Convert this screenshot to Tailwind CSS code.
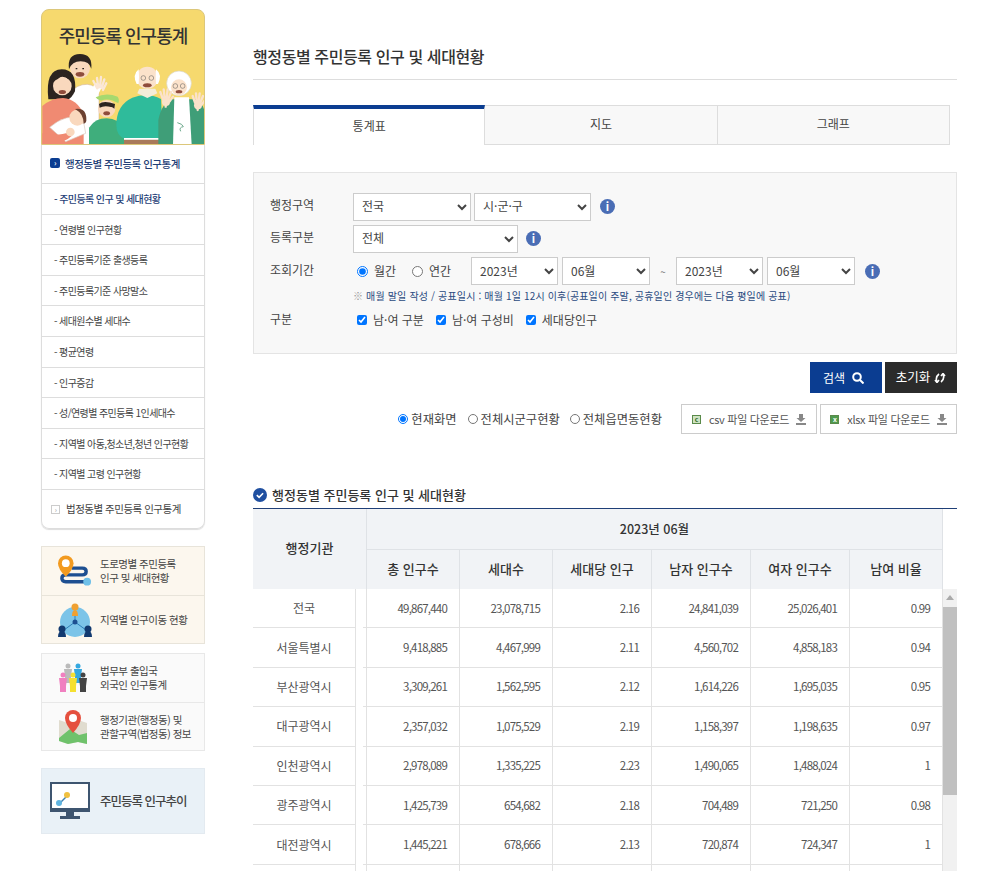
<!DOCTYPE html>
<html lang="ko">
<head>
    <meta charset="UTF-8">
    <title>행정동별 주민등록 인구 및 세대현황</title>
    <script src="https://cdn.jsdelivr.net/npm/@tailwindcss/browser@4"></script>
</head>
<body class="bg-white h-[871px] overflow-hidden font-['Noto_Sans_CJK_KR','Noto_Sans',sans-serif] text-[#555]">
<div class="flex">
    <!-- sidebar -->
    <aside class="w-[164px] ml-[41px] mt-[9px] shrink-0">
        <div class="h-[136px] bg-[#f6d96e] border border-[#dcc77a] rounded-t-[8px] overflow-hidden relative">
            <p class="text-center text-[#333] text-[18px] font-medium tracking-[-1px] pt-[12px] leading-[26px]">주민등록 인구통계</p>
            <svg class="absolute left-0 top-0" width="164" height="135" viewBox="0 0 490 405">
                <!-- man -->
                <path d="M80 405V250q25-28 55-27 25 2 35 25v157z" fill="#fff" stroke="#caa98c" stroke-width="1.5"/>
                <circle cx="113" cy="175" r="30" fill="#f9d8bd"/>
                <path d="M80 178q-6-46 33-46 38 0 34 44-6-22-32-22-26 0-35 24z" fill="#2c2420"/>
                <ellipse cx="113" cy="193" rx="13" ry="7" fill="#8f4c3c"/>
                <path d="M100 176h5M120 176h5" stroke="#2c2420" stroke-width="4"/>
                <path d="M150 262l15-30" stroke="#fff" stroke-width="24" stroke-linecap="round"/>
                <g stroke="#fbe7d6" stroke-width="7" stroke-linecap="round"><path d="M165 235l-12-22M168 232l-4-28M173 231l3-30M178 234l8-26M182 240l10-20"/></g>
                <!-- woman -->
                <path d="M18 268q-10-90 40-90 46 0 40 66-10 20-20 24z" fill="#2c2420"/>
                <circle cx="60" cy="228" r="28" fill="#f9d8bd"/>
                <path d="M30 215q20-6 30-22 14 14 30 22-2-26-30-28-28 2-30 28z" fill="#2c2420"/>
                <ellipse cx="60" cy="246" rx="11" ry="6" fill="#8f4c3c"/>
                <path d="M0 405V288q28-24 62-24 44 4 62 50v91z" fill="#f08a72"/>
                <path d="M22 352q50-44 100-26l8 44-60 25z" fill="#fff" stroke="#d8c9bb" stroke-width="2"/>
                <path d="M0 370q50 10 80-4l8 12q-30 27-88 27z" fill="#f08a72"/>
                <circle cx="84" cy="366" r="13" fill="#f9d8bd"/>
                <circle cx="105" cy="323" r="24" fill="#f9d8bd"/>
                <path d="M98 297q36-6 34 36-2 8-8 8 0-30-26-44z" fill="#6b4030"/>
                <!-- boy -->
                <path d="M140 405v-52q18-28 53-28 36 0 52 32v48z" fill="#3fae7c"/>
                <circle cx="193" cy="296" r="26" fill="#f9d8bd"/>
                <path d="M170 282q14-12 48 0l-2 14q-6-6-10-5-20-6-34 2z" fill="#2c2420"/>
                <path d="M160 262q32-16 66-2 6 8 2 20-28-18-52-8-12-2-16-10z" fill="#a6d96f"/>
                <ellipse cx="193" cy="310" rx="10" ry="6" fill="#8f4c3c"/>
                <!-- grandpa -->
                <path d="M222 345q0-60 48-82 45-18 86 4l6 122H250q-28-10-28-44z" fill="#2fbb9b"/>
                <path d="M245 388h112v17H245z" fill="#a97a5a"/>
                <path d="M245 384h112v5H245z" fill="#fff"/>
                <circle cx="315" cy="203" r="33" fill="#fbe2cb"/>
                <path d="M283 222q-14-28 6-44 2 22 0 44zm64 0q14-28-6-44-2 22 0 44z" fill="#fff"/>
                <path d="M285 250l30 14 30-14-6-14h-48z" fill="#f3ecd9"/>
                <circle cx="303" cy="204" r="7" fill="none" stroke="#555" stroke-width="1.5"/><circle cx="327" cy="204" r="7" fill="none" stroke="#555" stroke-width="1.5"/>
                <ellipse cx="315" cy="226" rx="13" ry="6" fill="#8f4c3c"/>
                <!-- grandma -->
                <path d="M348 405V330q10-50 40-62h70q32 12 30 60v77z" fill="#3f9e78"/>
                <path d="M396 262h44l8 143h-56z" fill="#fff"/>
                <circle cx="410" cy="220" r="37" fill="#fff" stroke="#d9d6c8" stroke-width="2"/>
                <circle cx="410" cy="232" r="24" fill="#fbe2cb"/>
                <circle cx="399" cy="228" r="7" fill="none" stroke="#555" stroke-width="1.5"/><circle cx="421" cy="228" r="7" fill="none" stroke="#555" stroke-width="1.5"/>
                <ellipse cx="410" cy="245" rx="10" ry="5" fill="#8f4c3c"/>
                <path d="M405 338q16 4 18 12-14 2-8 14" fill="none" stroke="#6ba88b" stroke-width="3"/>
                <g stroke="#fbe2cb" stroke-width="7" stroke-linecap="round">
                    <path d="M370 272v18M362 268l-8-22M367 264l-3-26M373 264l3-26M378 268l8-22M382 274l10-14"/>
                    <path d="M466 282v18M458 278l-7-20M463 274l-2-24M469 274l3-24M474 278l8-20M478 284l9-12"/>
                </g>
                <circle cx="371" cy="276" r="12" fill="#fbe2cb"/><circle cx="467" cy="286" r="12" fill="#fbe2cb"/>
            </svg>
        </div>
        <div class="border-x border-b border-[#ddd] rounded-b-[8px] shadow-[0_1px_1px_#ddd] text-[10px] tracking-[-0.6px] text-[#444]">
            <div class="h-[39px] flex items-center pl-[8px] gap-[5px] text-[#1f3f77] font-medium border-b border-[#ddd] text-[10.5px] tracking-[-0.5px]">
                <span class="w-[10px] h-[10px] rounded-[2px] bg-[#0b3d91] text-white text-[8px] leading-[9px] text-center mb-[3px]">›</span>
                행정동별 주민등록 인구통계
            </div>
            <div class="h-[31px] flex items-center pl-[12px] pb-[2px] border-b border-[#ddd] text-[#1f3f77] font-medium">- 주민등록 인구 및 세대현황</div>
            <div class="h-[30px] flex items-center pl-[12px] pb-[1px] border-b border-[#ddd]">- 연령별 인구현황</div>
            <div class="h-[31px] flex items-center pl-[12px] pb-[2px] border-b border-[#ddd]">- 주민등록기준 출생등록</div>
            <div class="h-[30px] flex items-center pl-[12px] pb-[1px] border-b border-[#ddd]">- 주민등록기준 사망말소</div>
            <div class="h-[31px] flex items-center pl-[12px] pb-[2px] border-b border-[#ddd]">- 세대원수별 세대수</div>
            <div class="h-[31px] flex items-center pl-[12px] pb-[2px] border-b border-[#ddd]">- 평균연령</div>
            <div class="h-[30px] flex items-center pl-[12px] pb-[1px] border-b border-[#ddd]">- 인구증감</div>
            <div class="h-[31px] flex items-center pl-[12px] pb-[2px] border-b border-[#ddd]">- 성/연령별 주민등록 1인세대수</div>
            <div class="h-[30px] flex items-center pl-[12px] pb-[1px] border-b border-[#ddd]">- 지역별 아동,청소년,청년 인구현황</div>
            <div class="h-[31px] flex items-center pl-[12px] pb-[2px] border-b border-[#ddd]">- 지역별 고령 인구현황</div>
            <div class="h-[38px] flex items-center pl-[9px] gap-[6px] text-[10.5px] tracking-[-0.5px]">
                <span class="w-[9px] h-[9px] border border-[#ccc] text-[#999] text-[7px] leading-[7px] text-center">›</span>
                법정동별 주민등록 인구통계
            </div>
        </div>

        <div class="mt-[17px] border border-[#e8e4da] bg-[#fcf7ee] text-[10.5px] leading-[14px] tracking-[-0.5px] text-[#444]">
            <div class="h-[49px] flex items-center border-b border-[#e8e4da]">
                <svg class="ml-[16px] w-[34px] h-[32px] shrink-0" viewBox="0 0 35 32">
                    <path d="M14 13h11q4 0 4 3.5T25 20H8q-4 0-4 3.5T8 27h20" fill="none" stroke="#1d4f91" stroke-width="3.5"/>
                    <path d="M8 0a8 8 0 0 1 8 8q0 6-8 14Q0 14 0 8a8 8 0 0 1 8-8z" fill="#f29a1f"/>
                    <circle cx="8" cy="8" r="4" fill="#fff"/>
                    <circle cx="30" cy="27" r="4" fill="#6fc0e8"/>
                </svg>
                <p class="ml-[8px]">도로명별 주민등록<br>인구 및 세대현황</p>
            </div>
            <div class="h-[47px] flex items-center">
                <svg class="ml-[16px] w-[34px] h-[34px] shrink-0" viewBox="0 0 34 34">
                    <circle cx="17" cy="19" r="15" fill="#7cc4e8"/>
                    <path d="M17 10v9M6 27l11-8 11 8" stroke="#2d7fb8" stroke-width="1" fill="none"/>
                    <circle cx="17" cy="19" r="2.5" fill="#1d4f91"/>
                    <circle cx="17" cy="4" r="3.5" fill="#f0a030"/><path d="M14 13q0-6 3-6t3 6z" fill="#f0a030"/>
                    <circle cx="4" cy="26" r="3.5" fill="#123a70"/><path d="M0 34q0-6 4-6t4 6z" fill="#123a70"/>
                    <circle cx="30" cy="26" r="3.5" fill="#123a70"/><path d="M26 34q0-6 4-6t4 6z" fill="#123a70"/>
                </svg>
                <p class="ml-[8px]">지역별 인구이동 현황</p>
            </div>
        </div>

        <div class="mt-[9px] border border-[#e8e8e8] bg-[#fafafa] text-[10.5px] leading-[14px] tracking-[-0.5px] text-[#444]">
            <div class="h-[49px] flex items-center border-b border-[#e8e8e8]">
                <svg class="ml-[16px] w-[30px] h-[30px] shrink-0" viewBox="0 0 30 30">
                    <g fill="#bbb"><circle cx="10" cy="3" r="2.5"/><path d="M6 6h8l-1 8v6H7v-6z"/></g>
                    <g fill="#35a8e0"><circle cx="20" cy="3" r="2.5"/><path d="M16 6h8l-1 8v6h-6v-6z"/></g>
                    <g fill="#f080c0"><circle cx="5" cy="12" r="2.5"/><path d="M1 15h8l-1 8v6H2v-6z"/></g>
                    <g fill="#f5e030"><circle cx="15" cy="12" r="2.5"/><path d="M11 15h8l-1 8v6h-6v-6z"/></g>
                    <g fill="#444"><circle cx="25" cy="12" r="2.5"/><path d="M21 15h8l-1 8v6h-6v-6z"/></g>
                </svg>
                <p class="ml-[12px]">법무부 출입국<br>외국인 인구통계</p>
            </div>
            <div class="h-[47px] flex items-center">
                <svg class="ml-[16px] w-[30px] h-[34px] shrink-0" viewBox="0 0 30 34">
                    <path d="M1 10l9 3 10-3 9 3v21l-9-2-10 2-9-3z" fill="#e0dccf"/>
                    <path d="M1 28l11-9 9 6 8-2v11l-9-2-10 2-9-3z" fill="#6fc26b"/>
                    <path d="M15 0a8 8 0 0 1 8 8q0 6-8 15Q7 14 7 8a8 8 0 0 1 8-8z" fill="#e5503f"/>
                    <circle cx="15" cy="8" r="4" fill="#fff"/>
                </svg>
                <p class="ml-[12px]">행정기관(행정동) 및<br>관할구역(법정동) 정보</p>
            </div>
        </div>

        <div class="mt-[17px] h-[66px] border border-[#e3eaf0] bg-[#e9f1f7] flex items-center">
            <svg class="ml-[8px] w-[40px] h-[38px] shrink-0" viewBox="0 0 40 38">
                <rect x="1" y="1" width="38" height="28" fill="#fff" stroke="#3e5570" stroke-width="2"/>
                <rect x="0" y="26" width="40" height="4" fill="#3e5570"/>
                <path d="M16 30h8v4h-8zM10 34h20v3H10z" fill="#3e5570"/>
                <path d="M10 21l8-8" stroke="#3e80b0" stroke-width="1.5"/>
                <circle cx="9" cy="21" r="3" fill="#5fb4e0"/>
                <circle cx="17" cy="13" r="3" fill="#f0c040"/>
            </svg>
            <p class="ml-[10px] text-[12.5px] font-medium tracking-[-1px] text-[#444]">주민등록 인구추이</p>
        </div>
    </aside>

    <!-- main -->
    <main class="w-[704px] ml-[48px] shrink-0">
        <h1 class="mt-[44px] h-[36px] border-b border-[#ddd] text-[16px] leading-[24px] font-medium tracking-[-0.4px] text-[#333]">행정동별 주민등록 인구 및 세대현황</h1>

        <div class="mt-[25px] w-[697px] grid grid-cols-3 h-[40px] text-[12px] text-[#444]">
            <div class="border-t-[4px] border-t-[#0b3d91] border-x border-[#ddd] bg-white flex items-center justify-center pb-[2px]">통계표</div>
            <div class="border border-l-0 border-[#ddd] bg-[#f8f8f8] flex items-center justify-center pb-[2px]">지도</div>
            <div class="border border-l-0 border-[#ddd] bg-[#f8f8f8] flex items-center justify-center pb-[2px]">그래프</div>
        </div>

        <form class="mt-[27px] h-[182px] border border-[#e4e4e4] bg-[#f8f8f8] pt-[20px] pl-[16px] text-[12px] text-[#444]">
            <div class="flex items-center h-[28px]">
                <label class="w-[83px] mb-[4px]">행정구역</label>
                <select class="w-[118px] h-[28px] bg-white border border-[#ccc] px-[4px] pb-[3px] text-[12px]"><option>전국</option></select>
                <select class="w-[117px] h-[28px] ml-[3px] bg-white border border-[#ccc] px-[4px] pb-[3px] text-[12px]"><option>시·군·구</option></select>
                <span class="ml-[9px] mb-[2px] w-[15px] h-[15px] rounded-full bg-[#4a6db5] text-white text-[11px] font-bold leading-[15px] text-center">i</span>
            </div>
            <div class="flex items-center h-[28px] mt-[4px]">
                <label class="w-[83px] mb-[4px]">등록구분</label>
                <select class="w-[165px] h-[28px] bg-white border border-[#ccc] px-[4px] pb-[3px] text-[12px]"><option>전체</option></select>
                <span class="ml-[8px] mb-[2px] w-[15px] h-[15px] rounded-full bg-[#4a6db5] text-white text-[11px] font-bold leading-[15px] text-center">i</span>
            </div>
            <div class="flex items-center h-[28px] mt-[4px]">
                <label class="w-[83px] mb-[2px]">조회기간</label>
                <label class="flex items-center gap-[6px] ml-[4px] w-[55px]"><input type="radio" name="period" checked class="w-[11px] h-[11px]">월간</label>
                <label class="flex items-center gap-[6px] w-[59px]"><input type="radio" name="period" class="w-[11px] h-[11px]">연간</label>
                <select class="w-[87px] h-[28px] bg-white border border-[#ccc] px-[4px] pb-[1px] text-[12px]"><option>2023년</option></select>
                <select class="w-[88px] h-[28px] ml-[4px] bg-white border border-[#ccc] px-[4px] pb-[1px] text-[12px]"><option>06월</option></select>
                <span class="w-[26px] text-center text-[10px] text-[#777]">~</span>
                <select class="w-[87px] h-[28px] bg-white border border-[#ccc] px-[4px] pb-[1px] text-[12px]"><option>2023년</option></select>
                <select class="w-[88px] h-[28px] ml-[4px] bg-white border border-[#ccc] px-[4px] pb-[1px] text-[12px]"><option>06월</option></select>
                <span class="ml-[10px] w-[15px] h-[15px] rounded-full bg-[#4a6db5] text-white text-[11px] font-bold leading-[15px] text-center">i</span>
            </div>
            <p class="ml-[83px] mt-[3px] h-[16px] leading-[16px] text-[10px] tracking-[0.15px] text-[#2a4a80]"><span class="text-[#999]">※</span> 매월 말일 작성 / 공표일시 : 매월 1일 12시 이후(공표일이 주말, 공휴일인 경우에는 다음 평일에 공표)</p>
            <div class="flex items-center h-[20px] mt-[6px]">
                <label class="w-[83px] mb-[2px]">구분</label>
                <label class="flex items-center gap-[6px] ml-[4px] mr-[12px]"><input type="checkbox" checked class="w-[10px] h-[10px]">남·여 구분</label>
                <label class="flex items-center gap-[6px] mr-[12px]"><input type="checkbox" checked class="w-[10px] h-[10px]">남·여 구성비</label>
                <label class="flex items-center gap-[6px]"><input type="checkbox" checked class="w-[10px] h-[10px]">세대당인구</label>
            </div>
        </form>

        <div class="flex justify-end gap-[3px] mt-[8px] text-[12px] text-white">
            <button class="w-[72px] h-[31px] bg-[#0b3d91] flex items-center justify-center gap-[7px] pr-[5px]">검색
                <svg class="w-[12px] h-[12px]" viewBox="0 0 12 12" fill="none" stroke="#fff" stroke-width="2"><circle cx="5" cy="5" r="3.8"/><path d="M8 8l3.5 3.5"/></svg>
            </button>
            <button class="w-[72px] h-[31px] bg-[#2b2b2b] flex items-center justify-center gap-[4px] text-[12.5px]">초기화
                <svg class="w-[12px] h-[10px]" viewBox="0 0 12 10" fill="none" stroke="#fff" stroke-width="1.6"><path d="M5 1Q1 4 3 9M1 7l2 2.5L5 7"/><path d="M7 9q4-3 2-8M7 3l2-2.5L11 3"/></svg>
            </button>
        </div>

        <div class="flex items-center justify-end mt-[11px] text-[12.3px] text-[#444]">
            <label class="flex items-center gap-[3px] mr-[11px]"><input type="radio" name="scope" checked class="w-[10px] h-[10px]">현재화면</label>
            <label class="flex items-center gap-[3px] mr-[10px]"><input type="radio" name="scope" class="w-[10px] h-[10px]">전체시군구현황</label>
            <label class="flex items-center gap-[3px] mr-[19px]"><input type="radio" name="scope" class="w-[10px] h-[10px]">전체읍면동현황</label>
            <button class="w-[136px] h-[30px] border border-[#ccc] flex items-center justify-center text-[11px] tracking-[-0.3px] text-[#555]">
                <span class="w-[9px] h-[9px] border border-[#5a8a4a] bg-[#cfe3c2] text-[#2f6a2a] text-[7px] leading-[7px] font-bold text-center mr-[8px]">c</span>csv 파일 다운로드
                <svg class="w-[10px] h-[11px] ml-[7px]" viewBox="0 0 10 11" fill="#888"><path d="M3 0h4v4h2.5L5 8 .5 4H3zM0 9h10v2H0z"/></svg>
            </button>
            <button class="w-[137px] h-[30px] ml-[3px] border border-[#ccc] flex items-center justify-center text-[11px] tracking-[-0.3px] text-[#555]">
                <span class="w-[9px] h-[9px] border border-[#5a8a4a] bg-[#4f9a4f] text-white text-[7px] leading-[7px] font-bold text-center mr-[8px]">x</span>xlsx 파일 다운로드
                <svg class="w-[10px] h-[11px] ml-[7px]" viewBox="0 0 10 11" fill="#888"><path d="M3 0h4v4h2.5L5 8 .5 4H3zM0 9h10v2H0z"/></svg>
            </button>
        </div>

        <h2 class="mt-[51px] h-[24px] border-b border-[#1f3f77] flex items-start gap-[5px] text-[13px] leading-[20px] font-medium text-[#333]">
            <svg class="w-[14px] h-[14px] mt-[3px] shrink-0" viewBox="0 0 14 14"><circle cx="7" cy="7" r="7" fill="#1f4fa0"/><path d="M3.8 7.2l2.3 2.2 4-4.2" fill="none" stroke="#fff" stroke-width="1.6"/></svg>
            행정동별 주민등록 인구 및 세대현황
        </h2>

        <!-- table header -->
        <div class="grid grid-cols-[114px_93px_93px_99px_99px_99px_93px] grid-rows-[41px_39px] w-[690px] bg-[#f1f3f6] text-[13px] font-medium text-[#333]">
            <div class="row-span-2 flex items-center justify-center border-r border-[#dfe2e6] pb-[2px]">행정기관</div>
            <div class="col-span-6 flex items-center justify-center border-r border-b border-[#dfe2e6] text-[12.5px]">2023년 06월</div>
            <div class="flex items-center justify-center border-r border-[#dfe2e6] pb-[2px]">총 인구수</div>
            <div class="flex items-center justify-center border-r border-[#dfe2e6] pb-[2px]">세대수</div>
            <div class="flex items-center justify-center border-r border-[#dfe2e6] pb-[2px]">세대당 인구</div>
            <div class="flex items-center justify-center border-r border-[#dfe2e6] pb-[2px]">남자 인구수</div>
            <div class="flex items-center justify-center border-r border-[#dfe2e6] pb-[2px]">여자 인구수</div>
            <div class="flex items-center justify-center border-r border-[#dfe2e6] pb-[2px]">남여 비율</div>
        </div>
        <!-- table body -->
        <div class="flex h-[282px] overflow-hidden">
            <div id="rows" class="w-[690px] shrink-0 text-[12px] text-[#555]"></div>
            <div class="w-[14px] bg-[#f1f1f1]">
                <div class="h-[18px] flex justify-center pt-[6px]"><span class="border-x-[4px] border-x-transparent border-b-[5px] border-b-[#aaa] h-0"></span></div>
                <div class="h-[188px] bg-[#c0c0c0]"></div>
            </div>
        </div>
    </main>
</div>

<script>
    const data = [
        ['전국', '49,867,440', '23,078,715', '2.16', '24,841,039', '25,026,401', '0.99'],
        ['서울특별시', '9,418,885', '4,467,999', '2.11', '4,560,702', '4,858,183', '0.94'],
        ['부산광역시', '3,309,261', '1,562,595', '2.12', '1,614,226', '1,695,035', '0.95'],
        ['대구광역시', '2,357,032', '1,075,529', '2.19', '1,158,397', '1,198,635', '0.97'],
        ['인천광역시', '2,978,089', '1,335,225', '2.23', '1,490,065', '1,488,024', '1'],
        ['광주광역시', '1,425,739', '654,682', '2.18', '704,489', '721,250', '0.98'],
        ['대전광역시', '1,445,221', '678,666', '2.13', '720,874', '724,347', '1'],
        ['', '', '', '', '', '', '']
    ];
    const rows = document.getElementById('rows');
    const numCell = 'flex items-center justify-end pr-[12px] border-b border-r border-[#e2e2e2] tracking-[-0.8px] text-[11.5px]';
    rows.innerHTML = data.map(r => `
        <div class="grid grid-cols-[103px_7px_4px_93px_93px_99px_99px_99px_93px] h-[39.4px]">
            <div class="flex items-center justify-center border-b border-r border-[#e2e2e2]">${r[0]}</div>
            <div></div>
            <div class="border-b border-r border-[#e2e2e2]"></div>
            ${r.slice(1).map(v => `<div class="${numCell}">${v}</div>`).join('')}
        </div>`).join('');
</script>
</body>
</html>
